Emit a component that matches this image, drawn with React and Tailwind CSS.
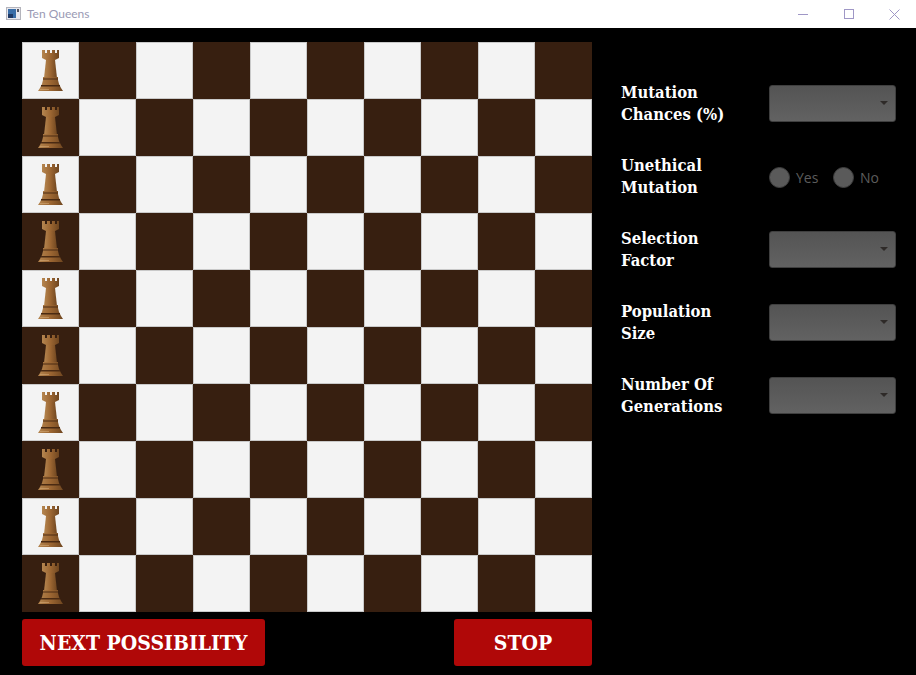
import React from 'react';

const SERIF = "font-['DejaVu_Serif_Condensed','DejaVu_Serif',serif]";
const rows = [0, 1, 2, 3, 4, 5, 6, 7, 8, 9];

function Rook() {
    return (
        <svg viewBox="0 0 57 57" className="w-[57px] h-[57px]">
            <defs>
                <linearGradient id="rookFill" x1="0" x2="1" y1="0" y2="0">
                    <stop offset="0" stopColor="#b58650" />
                    <stop offset="0.5" stopColor="#9c6632" />
                    <stop offset="1" stopColor="#6f4620" />
                </linearGradient>
            </defs>
            {/* crown */}
            <path fill="url(#rookFill)" d="M20 8h3v3h2V8h3v3h2V8h3v3h2V8h2v8l-4 2h-9l-4-2z" />
            {/* shaft */}
            <path fill="url(#rookFill)" d="M24 18h9l1 9 1 9H22l1-9z" />
            {/* collar and base */}
            <path fill="url(#rookFill)" d="M21 35h15v3l1 4 2 4 2 3H16l2-3 2-4 1-4z" />
            <path fill="#4a2a12" d="M21 36.5h15v1H21zM19 43h19v1.4H19z" />
            <path fill="#d6ab78" d="M18 47h9v1h-9z" opacity="0.55" />
        </svg>
    );
}

function Select() {
    return (
        <div className="w-[127px] h-[37px] rounded-[3px] border border-[#3f3f3f] bg-gradient-to-b from-[#545454] to-[#626262] flex items-center justify-end pr-[7px]">
            <div className="w-0 h-0 border-x-[4px] border-x-transparent border-t-[4px] border-t-[#2e2a28]" />
        </div>
    );
}

function Radio({ label, className }) {
    return (
        <div className={`flex items-center gap-[6px] ${className}`}>
            <div className="w-[21px] h-[21px] rounded-full border border-[#3f3f3f] bg-[#5a5a5a]" />
            <span className="font-['Open_Sans',sans-serif] text-[14px] text-[#5c5c5c]">{label}</span>
        </div>
    );
}

function Setting({ first, second, children }) {
    return (
        <div className="h-[44px] flex items-center justify-between">
            <div className={`${SERIF} font-bold text-[16.5px] leading-[22px] pt-[2px] text-white`}>
                <div>{first}</div>
                <div>{second}</div>
            </div>
            {children}
        </div>
    );
}

export default function App() {
    return (
        <div className="w-[916px] h-[675px] bg-black flex flex-col overflow-hidden">
            {/* Title bar */}
            <div className="h-[28px] bg-white flex items-center justify-between shrink-0">
                <div className="flex items-center pl-[6px] gap-[5px]">
                    <svg width="16" height="16" viewBox="0 0 16 16" shapeRendering="crispEdges">
                        <rect x="0.5" y="1.5" width="14" height="12" fill="#e8e8ee" stroke="#b4b4bc" />
                        <rect x="2" y="3" width="8" height="9" fill="#3a6ea8" />
                        <rect x="2" y="8" width="5" height="4" fill="#1f3a66" />
                        <rect x="11" y="3" width="2" height="3" fill="#555560" />
                    </svg>
                    <span className="font-['Lato',sans-serif] text-[12px] text-[#9a9ab4]">Ten Queens</span>
                </div>
                <div className="flex items-center">
                    <div className="w-[46px] h-[28px] flex items-center justify-center">
                        <div className="w-[10px] h-px bg-[#9f97c6]" />
                    </div>
                    <div className="w-[46px] h-[28px] flex items-center justify-center">
                        <div className="w-[10px] h-[10px] border border-[#9f97c6]" />
                    </div>
                    <div className="w-[44px] h-[28px] flex items-center justify-center">
                        <svg width="11" height="11" viewBox="0 0 11 11" stroke="#9f97c6" strokeWidth="1">
                            <path d="M0.5 0.5l10 10M10.5 0.5l-10 10" />
                        </svg>
                    </div>
                </div>
            </div>

            <div className="flex flex-1">
                {/* Board and buttons */}
                <div className="w-[570px] ml-[22px] mt-[14px] shrink-0">
                    <div className="grid grid-cols-[repeat(10,57px)] grid-rows-[repeat(10,57px)]">
                        {rows.map(r => rows.map(c => (
                            <div
                                key={`${r}-${c}`}
                                className={(r + c) % 2 === 0
                                    ? 'bg-[#f3f3f3] border border-[#c9c9c9]'
                                    : 'bg-[#371f10]'}
                            >
                                {c === 0 && <div className={(r + c) % 2 === 0 ? '-m-px' : ''}><Rook /></div>}
                            </div>
                        )))}
                    </div>
                    <div className="flex justify-between mt-[7px]">
                        <div className={`${SERIF} w-[243px] h-[47px] rounded-[3px] bg-[#b00808] flex items-center justify-center font-bold text-[21px] text-white`}>
                            NEXT POSSIBILITY
                        </div>
                        <div className={`${SERIF} w-[138px] h-[47px] rounded-[3px] bg-[#b00808] flex items-center justify-center font-bold text-[21px] text-white`}>
                            STOP
                        </div>
                    </div>
                </div>

                {/* Settings */}
                <div className="w-[275px] ml-[29px] mt-[53px] flex flex-col gap-[29px]">
                    <Setting first="Mutation" second="Chances (%)"><Select /></Setting>
                    <Setting first="Unethical" second="Mutation">
                        <div className="w-[127px] flex items-center pt-[2px]">
                            <Radio label="Yes" className="w-[64px]" />
                            <Radio label="No" />
                        </div>
                    </Setting>
                    <Setting first="Selection" second="Factor"><Select /></Setting>
                    <Setting first="Population" second="Size"><Select /></Setting>
                    <Setting first="Number Of" second="Generations"><Select /></Setting>
                </div>
            </div>
        </div>
    );
}
